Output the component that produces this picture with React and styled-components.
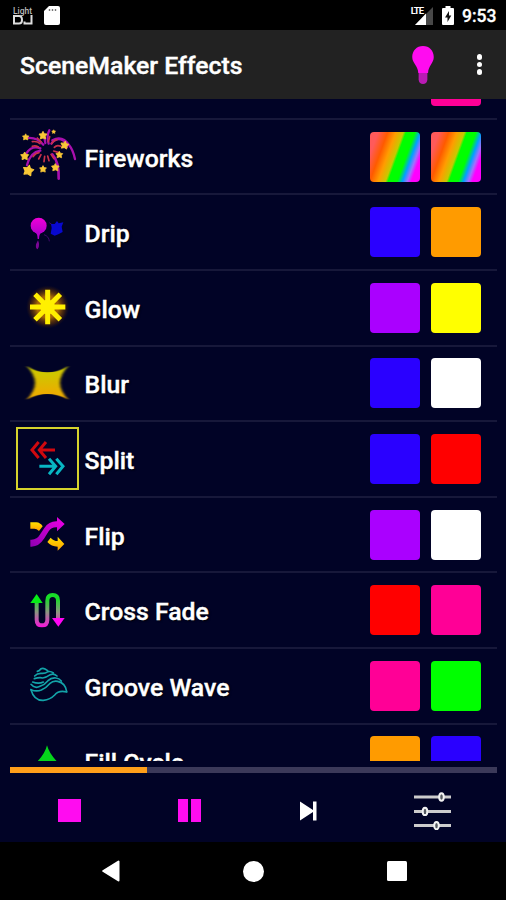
import React from 'react'
import styled, { createGlobalStyle } from 'styled-components';

const RAINBOW = 'linear-gradient(110deg, #ff5a5a 12%, #ff5a00 26%, #ff9c00 38%, #c8c800 49%, #00ff00 53%, #00ff00 66%, #00a0ff 74%, #a070ff 81%, #ff00ff 87%)';

const STAR = 'M0 -12 L4 -5 L12 -4 L7 3 L8 11 L0 8 L-8 11 L-7 3 L-12 -4 L-4 -5 Z';

const FireworksIcon = () => (
    <Icon viewBox="3 10 189 189">
        <g fill="none" strokeLinecap="round">
            <g stroke="#a80fae" strokeWidth="7">
                <path d="M85 69 Q66 46 37 49" />
                <path d="M91 64 Q89 47 84 35" />
                <path d="M101 66 Q94 42 103 26" />
                <path d="M109 66 Q125 44 144 56 Q153 62 156 76" />
                <path d="M76 80 Q51 70 34 95" />
                <path d="M76 87 Q46 92 36 130" />
                <path d="M115 53 Q138 44 158 60 Q170 72 176 98" stroke="none" />
                <path d="M112 98 Q133 122 131 171" strokeWidth="8" />
                <path d="M113 84 Q137 64 160 74 Q172 86 179 110" stroke="none" />
                <path d="M112 56 Q142 40 162 70 Q174 84 180 112" />
            </g>
            <g stroke="#c9324a" strokeWidth="5">
                <path d="M52 60 Q67 58 75 66" />
                <path d="M67 49 L79 61" />
                <path d="M52 74 Q61 70 70 76" />
                <path d="M54 105 Q62 94 72 93" />
                <path d="M71 112 L78 99" />
                <path d="M87 120 L89 104" />
                <path d="M102 117 L98 103" />
                <path d="M117 111 L108 98" />
                <path d="M132 93 L116 88" />
                <path d="M137 74 Q126 68 118 77" />
                <path d="M126 54 Q114 57 110 66" />
                <path d="M104 45 L100 60" />
            </g>
        </g>
        <g fill="#f8c736" stroke="#f8c736" strokeWidth="2.5" strokeLinejoin="round">
            <path d={STAR} transform="translate(32 46) scale(.8)" />
            <path d={STAR} transform="translate(84 41)" />
            <path d={STAR} transform="translate(116 30) scale(.5)" />
            <path d={STAR} transform="translate(149 70) rotate(10)" />
            <path d={STAR} transform="translate(29 103)" />
            <path d={STAR} transform="translate(133 99) scale(.85)" />
            <path d={STAR} transform="translate(40 146) scale(1.3) rotate(12)" />
            <path d={STAR} transform="translate(84 142) scale(.85)" />
            <path d={STAR} transform="translate(121 137) scale(.95)" />
        </g>
    </Icon>
);

const DripIcon = () => (
    <Icon viewBox="48 273 189 189">
        <defs>
            <linearGradient id="drip" x1="0" y1="0" x2="0" y2="1">
                <stop offset="0" stopColor="#f000d8" />
                <stop offset="1" stopColor="#b400cc" />
            </linearGradient>
        </defs>
        <circle cx="116" cy="347" r="24" fill="url(#drip)" />
        <path d="M104 366 Q113 370 113 387 L117 387 Q117 370 128 364 Z" fill="#b400cc" />
        <path d="M114 391 Q121 407 113 418 Q106 416 108 403 Z" fill="#7a0696" />
        <path d="M148 338 L160 347 M132 374 Q147 379 148 394" fill="none" stroke="#4a0a78" strokeWidth="2.5" />
        <path d="M153 342 L164 342 L171 333 L176 340 L190 337 L185 350 L188 366 L175 373 L164 377 L152 371 L155 354 Z" fill="#0808cf" />
    </Icon>
);

const GlowIcon = () => (
    <Icon viewBox="48 20 189 189">
        <defs>
            <radialGradient id="glow">
                <stop offset="0.5" stopColor="#c27800" stopOpacity=".85" />
                <stop offset="0.8" stopColor="#6b3700" stopOpacity=".5" />
                <stop offset="1" stopColor="#301a10" stopOpacity="0" />
            </radialGradient>
        </defs>
        <circle cx="143" cy="113" r="65" fill="url(#glow)" />
        <path d="M143 61 V165 M90 113 H196 M105 75 L181 151 M181 75 L105 151" stroke="#fff000" strokeWidth="15" />
        <circle cx="143" cy="113" r="22" fill="#fff000" />
    </Icon>
);

const BlurIcon = () => (
    <Icon viewBox="48 247 189 189">
        <defs>
            <linearGradient id="blurFill" x1="0" y1="0" x2="0" y2="1">
                <stop offset="0" stopColor="#c9cc00" />
                <stop offset="1" stopColor="#f0a800" />
            </linearGradient>
            <filter id="soft" x="-20%" y="-20%" width="140%" height="140%">
                <feGaussianBlur stdDeviation="5 2" />
            </filter>
        </defs>
        <path d="M79 288 Q142 328 206 288 Q154 340 206 390 Q142 356 79 390 Q131 340 79 288 Z" fill="url(#blurFill)" filter="url(#soft)" />
        <path d="M116 307 Q142 313 170 307 Q162 340 170 374 Q142 370 116 374 Q124 340 116 307 Z" fill="url(#blurFill)" opacity=".6" />
    </Icon>
);

const SplitIcon = () => (
    <Icon viewBox="48 23 189 189">
        <g fill="none" strokeWidth="9">
            <path d="M165 92 H122 M116 68 L96 92 L116 116 M138 68 L118 92 L138 116" stroke="#d0090f" />
            <path d="M118 141 H164 M147 118 L167 141 L147 165 M169 118 L189 141 L169 165" stroke="#08b6c3" />
        </g>
    </Icon>
);

const FlipIcon = () => (
    <Icon viewBox="48 250 189 189">
        <defs>
            <linearGradient id="flip" x1="0" y1="1" x2="1" y2="0">
                <stop offset="0" stopColor="#8d00b0" />
                <stop offset="1" stopColor="#f000e8" />
            </linearGradient>
            <linearGradient id="flipGold" x1="0" y1="0" x2="0" y2="1">
                <stop offset="0" stopColor="#ffe000" />
                <stop offset="1" stopColor="#ff9f00" />
            </linearGradient>
        </defs>
        <path d="M91 308 H109 Q121 309 128 320 L117 334 Q110 327 103 327 H91 Z" fill="url(#flipGold)" />
        <path d="M152 354 Q161 364 173 364 V351 L193 373 L173 393 V381 Q154 381 142 367 Z" fill="url(#flipGold)" />
        <path d="M91 360 Q110 362 121 343 L133 325 Q147 304 171 305 V292 L194 313 L171 335 V323 Q154 322 146 335 L133 356 Q116 383 91 381 Z" fill="url(#flip)" />
    </Icon>
);

const CrossFadeIcon = () => (
    <Icon viewBox="48 27 189 189">
        <defs>
            <linearGradient id="fade" gradientUnits="userSpaceOnUse" x1="0" y1="72" x2="0" y2="170">
                <stop offset="0.15" stopColor="#18dc28" />
                <stop offset="0.55" stopColor="#8c9680" />
                <stop offset="1" stopColor="#f418d8" />
            </linearGradient>
        </defs>
        <path d="M110 95 V149 Q110 166 126 166 Q142 166 142 149 V92 Q142 75 158 75 Q174 75 174 92 V145" fill="none" stroke="url(#fade)" strokeWidth="12" />
        <path d="M110 72 L128 99 H91 Z" fill="#06ed16" />
        <path d="M156 144 H194 L175 170 Z" fill="#ff05f4" />
    </Icon>
);

const WaveIcon = () => (
    <Icon viewBox="48 254 189 189">
        <g fill="none" stroke="#13a3a8" strokeWidth="5" strokeLinecap="round" strokeLinejoin="round">
            <path d="M112 306 Q119 304 122 299 Q128 295 135 299 L143 304" />
            <path d="M104 320 Q112 311 125 312 Q135 313 144 307 Q153 305 160 311" />
            <path d="M103 328 Q119 323 128 326 Q138 325 151 316 Q161 311 171 320" />
            <path d="M93 345 Q104 359 120 351 Q134 346 144 334 Q154 324 168 326 Q177 327 184 335" />
            <path d="M98 338 Q116 345 130 338" />
            <path d="M93 361 Q109 368 124 362 Q139 355 149 343 Q160 333 173 336 Q197 341 200 367" />
            <path d="M93 361 Q102 394 130 393 Q151 391 164 377 Q176 362 200 368" />
        </g>
    </Icon>
);

const FillIcon = () => (
    <Icon viewBox="48 61 189 189">
        <path d="M141 107 Q148 132 169 153 L194 200 H90 L114 153 Q135 132 141 107 Z" fill="#05d51b" />
    </Icon>
);

const effects = [
    { name: '', icon: null, colors: ['transparent', '#ff0096'] },
    { name: 'Fireworks', icon: <FireworksIcon />, colors: [RAINBOW, RAINBOW] },
    { name: 'Drip', icon: <DripIcon />, colors: ['#2a00ff', '#ff9b00'] },
    { name: 'Glow', icon: <GlowIcon />, colors: ['#aa00ff', '#ffff00'] },
    { name: 'Blur', icon: <BlurIcon />, colors: ['#2a00ff', '#ffffff'] },
    { name: 'Split', icon: <SplitIcon />, colors: ['#2a00ff', '#ff0000'], selected: true },
    { name: 'Flip', icon: <FlipIcon />, colors: ['#aa00ff', '#ffffff'] },
    { name: 'Cross Fade', icon: <CrossFadeIcon />, colors: ['#ff0000', '#ff0096'] },
    { name: 'Groove Wave', icon: <WaveIcon />, colors: ['#ff0096', '#00ff00'] },
    { name: 'Fill Cycle', icon: <FillIcon />, colors: ['#ff9b00', '#2a00ff'] },
];

const App = () => {
  return (
    <Screen>
        <GlobalStyle />
        <StatusBar>
            <Logo>
                <span>Light</span>
                <svg width="20" height="10" viewBox="0 0 20 10" fill="none" stroke="#ddd" strokeWidth="2">
                    <path d="M1 1 H6 Q9 1 9 5 Q9 8.5 6 8.5 H1 Z M18.5 0 V8.5 H11.5 V6.5" />
                </svg>
            </Logo>
            <svg width="16" height="19" viewBox="0 0 16 19">
                <path d="M5 0 H14 Q16 0 16 2 V17 Q16 19 14 19 H2 Q0 19 0 17 V5 Z" fill="#fff" />
                <path d="M5.5 3 V5 M8.5 3 V5 M11.5 3 V5" stroke="#777" strokeWidth="1.4" />
            </svg>
            <Spacer />
            <Signal>
                <span>LTE</span>
                <svg width="19" height="18" viewBox="0 0 19 18">
                    <path d="M19 0 V18 H1 Z" fill="#484848" />
                    <path d="M12 6.6 V18 H1 Z" fill="#fff" />
                </svg>
            </Signal>
            <svg width="12" height="19" viewBox="0 0 12 19">
                <path d="M3.5 0 H8.5 V2 H11 Q12 2 12 3 V18 Q12 19 11 19 H1 Q0 19 0 18 V3 Q0 2 1 2 H3.5 Z" fill="#fff" />
                <path d="M7 5 L3 11.5 H5.5 V16 L9.3 9.5 H7 Z" fill="#111" />
            </svg>
            <Clock>9:53</Clock>
        </StatusBar>
        <AppBar>
            <Title>SceneMaker Effects</Title>
            <svg width="22" height="38" viewBox="479 137 64 113">
                <path d="M498 216 H524 V237 Q522 250 511 250 Q500 250 498 237 Z" fill="#b91bb4" />
                <path d="M511 137 C530 137 543 151 543 170 C543 188 527 196 526 217 H497 C496 196 479 188 479 170 C479 151 492 137 511 137 Z" fill="#ff0cf0" />
            </svg>
            <Menu><i /><i /><i /></Menu>
        </AppBar>
        <ListView>
            <Rows>
                {effects.map((effect, i) => (
                    <Row key={i}>
                        <IconBox $selected={effect.selected}>{effect.icon}</IconBox>
                        <Name>{effect.name}</Name>
                        <Swatch $color={effect.colors[0]} />
                        <Swatch $color={effect.colors[1]} />
                    </Row>
                ))}
            </Rows>
        </ListView>
        <Track><Progress /></Track>
        <Controls>
            <svg width="23" height="23"><path d="M0 0 H23 V23 H0 Z" fill="#ff0cf0" /></svg>
            <svg width="26" height="23"><path d="M0 0 H10 V23 H0 Z M13 0 H23 V23 H13 Z" fill="#ff0cf0" /></svg>
            <svg width="17" height="20"><path d="M0 .5 L13 9 V.5 H16.5 V19.5 H13 V11 L0 19.5 Z" fill="#fff" /></svg>
            <svg width="37" height="38" viewBox="0 0 37 38">
                <path d="M0 5 H37 M0 19.4 H37 M0 33.6 H37" stroke="#ccc" strokeWidth="3" />
                <g fill="#555a60" stroke="#f2f2f2" strokeWidth="2">
                    <ellipse cx="27.5" cy="5" rx="2.3" ry="3.7" />
                    <ellipse cx="11" cy="19.4" rx="2.3" ry="3.7" />
                    <ellipse cx="22.5" cy="33.6" rx="2.3" ry="3.7" />
                </g>
            </svg>
        </Controls>
        <NavBar>
            <svg width="18" height="22"><path d="M16.5 1.5 V20.5 L1.2 11 Z" fill="#fff" stroke="#fff" strokeWidth="2" strokeLinejoin="round" /></svg>
            <svg width="21" height="21"><circle cx="10.5" cy="10.5" r="10.5" fill="#fff" /></svg>
            <svg width="20" height="20"><rect width="20" height="20" rx="1.5" fill="#fff" /></svg>
        </NavBar>
    </Screen>
  )
}

const GlobalStyle = createGlobalStyle`
  body {
    margin: 0;
    background: #000;
  }
  * {
    box-sizing: border-box;
  }
  svg {
    display: block;
    flex-shrink: 0;
  }
`;

const Screen = styled.div`
  width: 506px;
  height: 900px;
  display: flex;
  flex-direction: column;
  overflow: hidden;
  background: #010326;
  color: #fff;
  font-family: Roboto, sans-serif;
  font-weight: 500;
`;

const StatusBar = styled.div`
  height: 30px;
  flex-shrink: 0;
  display: flex;
  align-items: center;
  padding: 1px 9px 0 13px;
  background: #000;
`;

const Logo = styled.div`
  width: 20px;
  margin-right: 11px;
  span {
    display: block;
    font-size: 8.5px;
    line-height: 8px;
    color: #bbb;
  }
`;

const Spacer = styled.div`
  flex: 1;
`;

const Signal = styled.div`
  display: flex;
  align-items: flex-start;
  margin-right: 9px;
  span {
    font-size: 9.5px;
    line-height: 8px;
    font-weight: 700;
    letter-spacing: -1px;
    margin-right: -9px;
    z-index: 1;
  }
`;

const Clock = styled.span`
  width: 35px;
  margin-left: 8px;
  font-size: 17.5px;
  line-height: 28px;
  white-space: nowrap;
  -webkit-text-stroke: 0.3px #fff;
`;

const AppBar = styled.div`
  height: 69px;
  flex-shrink: 0;
  display: flex;
  align-items: center;
  padding: 0 24px 0 20px;
  background: #222;
`;

const Title = styled.h1`
  flex: 1;
  margin: 0;
  padding-top: 2px;
  font-size: 24.8px;
  font-weight: 500;
  -webkit-text-stroke: 0.4px #fff;
`;

const Menu = styled.div`
  display: flex;
  flex-direction: column;
  gap: 2px;
  margin-left: 42.5px;
  i {
    width: 5.5px;
    height: 5.5px;
    border-radius: 50%;
    background: #fff;
  }
`;

const ListView = styled.div`
  height: 662px;
  flex-shrink: 0;
  overflow: hidden;
`;

/* scrolled part way down the list */
const Rows = styled.div`
  margin: -54.8px 9px 0 10px;
`;

const Row = styled.div`
  height: 75.6px;
  display: flex;
  align-items: center;
  padding: 0 16px 0 6px;
  border-bottom: 2px solid #17183a;
`;

const IconBox = styled.div`
  width: 63px;
  height: 63px;
  flex-shrink: 0;
  outline: ${({ $selected }) => ($selected ? '2px solid #d6d32c' : 'none')};
  outline-offset: -2px;
`;

const Icon = styled.svg`
  width: 63px;
  height: 63px;
`;

const Name = styled.span`
  flex: 1;
  padding: 3px 0 0 5.5px;
  font-size: 24.8px;
  white-space: nowrap;
  -webkit-text-stroke: 0.4px #fff;
  text-shadow: 1px 1px 2px #000;
`;

const Swatch = styled.div`
  width: 50px;
  height: 50px;
  flex-shrink: 0;
  margin-left: 11.5px;
  border-radius: 4px;
  background: ${({ $color }) => $color};
`;

const Track = styled.div`
  height: 6px;
  flex-shrink: 0;
  margin: 6px 9px 0 10px;
  background: #3b3959;
`;

const Progress = styled.div`
  width: 137px;
  height: 100%;
  background: #ff9f1a;
`;

const Controls = styled.div`
  height: 69px;
  flex-shrink: 0;
  display: flex;
  align-items: center;
  justify-content: space-between;
  padding: 6px 55px 0 58px;
`;

const NavBar = styled.div`
  height: 58px;
  flex-shrink: 0;
  display: flex;
  align-items: center;
  justify-content: space-between;
  padding: 0 99px 0 102px;
  background: #000;
`;

export default App
